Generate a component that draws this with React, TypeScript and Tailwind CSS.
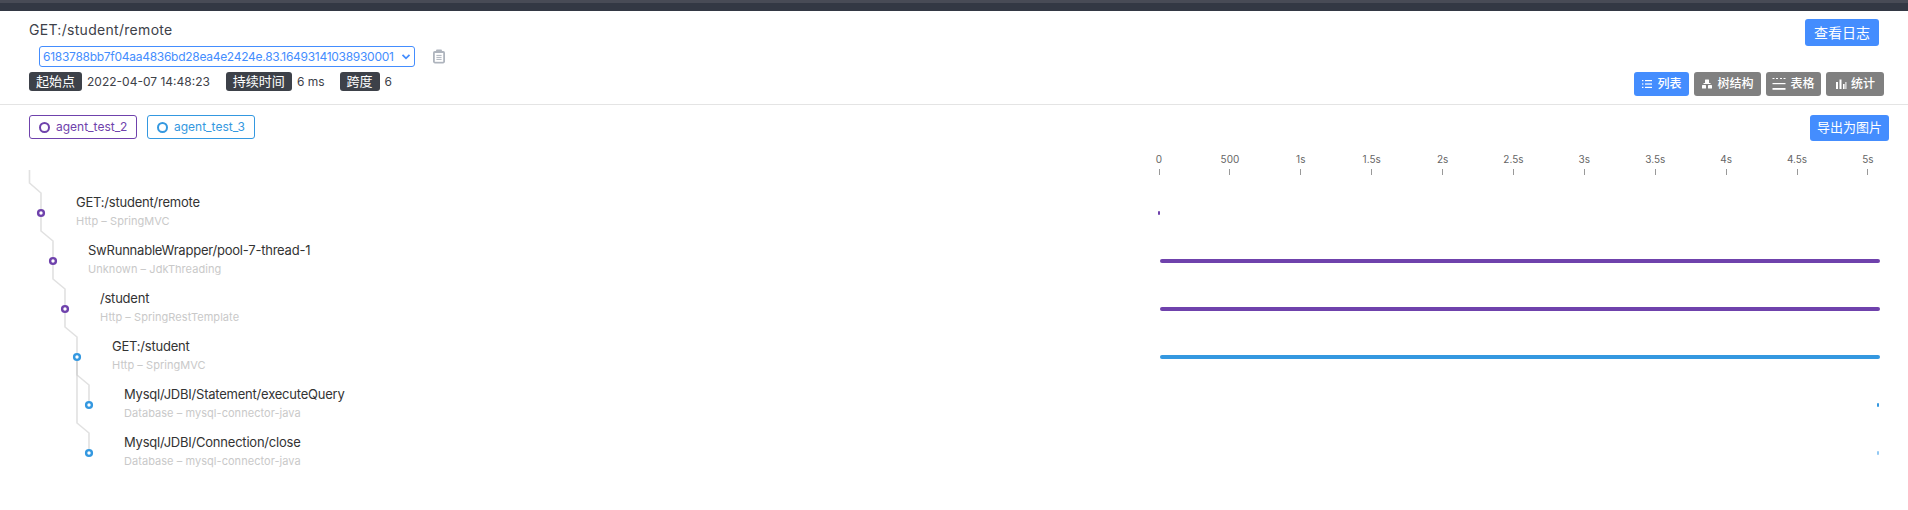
import React from 'react';

const sans = '[font-family:Inter,"Noto_Sans_CJK_SC",sans-serif]';

const spans = [
  { title: 'GET:/student/remote', sub: 'Http – SpringMVC', indent: 76, color: '#6f42ac', left: -1, width: 2 },
  { title: 'SwRunnableWrapper/pool-7-thread-1', sub: 'Unknown – JdkThreading', indent: 88, color: '#6f42ac', left: 1, width: 720 },
  { title: '/student', sub: 'Http – SpringRestTemplate', indent: 100, color: '#6f42ac', left: 1, width: 720 },
  { title: 'GET:/student', sub: 'Http – SpringMVC', indent: 112, color: '#3498e0', left: 1, width: 720 },
  { title: 'Mysql/JDBI/Statement/executeQuery', sub: 'Database – mysql-connector-java', indent: 124, color: '#3498e0', left: 718, width: 2 },
  { title: 'Mysql/JDBI/Connection/close', sub: 'Database – mysql-connector-java', indent: 124, color: '#93c9f3', left: 718, width: 2 },
];

const ticks = ['0', '500', '1s', '1.5s', '2s', '2.5s', '3s', '3.5s', '4s', '4.5s', '5s'];

const nodes = [
  { x: 41, y: 213, c: '#6f42ac' },
  { x: 53, y: 261, c: '#6f42ac' },
  { x: 65, y: 309, c: '#6f42ac' },
  { x: 77, y: 357, c: '#3498e0' },
  { x: 89, y: 405, c: '#3498e0' },
  { x: 89, y: 453, c: '#3498e0' },
];

const TreeLines = () => (
  <svg className="absolute left-0 top-0" width="120" height="510" fill="none">
    <g stroke="#c4c4c4" strokeOpacity="0.5" strokeWidth="1.6">
      <path d="M29.5 170V183L41 193V213" />
      <path d="M41 213V231L53 241V261" />
      <path d="M53 261V279L65 289V309" />
      <path d="M65 309V327L77 337V357" />
      <path d="M77 357V375L89 385V405" />
      <path d="M77 357V423L89 433V453" />
    </g>
    {nodes.map((n) => (
      <circle key={n.y} cx={n.x} cy={n.y} r="2.9" fill="#fff" stroke={n.c} strokeWidth="2.4" />
    ))}
  </svg>
);

const Tag = ({ children }: { children: React.ReactNode }) => (
  <span className="block rounded-[3px] bg-[#3d4149] px-[7px] text-[13px] leading-[19px] text-white">{children}</span>
);

const ViewBtn = ({ icon, label, active, width }: { icon: React.ReactNode; label: string; active?: boolean; width: string }) => (
  <button className={`flex h-6 items-center justify-center gap-[4px] rounded-[3px] text-[12px] font-medium text-white ${width} ${active ? 'bg-[#448dfe]' : 'bg-[#808080]'}`}>
    {icon}
    {label}
  </button>
);

const ListIcon = () => (
  <svg width="12" height="12" viewBox="0 0 12 12" fill="#fff">
    <rect x="1" y="2" width="1.4" height="1.2" /><rect x="4" y="2" width="7" height="1.2" />
    <rect x="1" y="5.4" width="1.4" height="1.2" /><rect x="4" y="5.4" width="7" height="1.2" />
    <rect x="1" y="8.8" width="1.4" height="1.2" /><rect x="4" y="8.8" width="7" height="1.2" />
  </svg>
);

const TreeIcon = () => (
  <svg width="12" height="12" viewBox="0 0 12 12" fill="#fff">
    <rect x="4" y="1.5" width="4" height="3.5" rx=".5" />
    <rect x="1" y="7" width="4" height="3.5" rx=".5" />
    <rect x="7" y="7" width="4" height="3.5" rx=".5" />
    <rect x="2.5" y="5" width="7" height="1" />
  </svg>
);

const TableIcon = () => (
  <svg width="14" height="14" viewBox="0 0 14 14" fill="#fff">
    <rect x="0.5" y="1" width="2" height="1" /><rect x="4" y="1" width="2" height="1" /><rect x="8" y="1" width="2" height="1" /><rect x="11.5" y="1" width="2" height="1" />
    <rect x="0.5" y="6" width="13" height="1.2" />
    <rect x="0.5" y="11" width="13" height="1.8" />
  </svg>
);

const ChartIcon = () => (
  <svg width="12" height="12" viewBox="0 0 12 12" fill="#fff">
    <rect x="1" y="4" width="2" height="7" /><rect x="4.5" y="1.5" width="2" height="9.5" /><rect x="8" y="6" width="1.6" height="5" /><rect x="10.4" y="4" width="1" height="7" />
  </svg>
);

const ClipboardIcon = () => (
  <svg width="14" height="15" viewBox="0 0 14 15" fill="none">
    <rect x="1" y="2" width="12" height="12.4" rx="1.8" fill="#aeb4bd" />
    <rect x="4" y="0.6" width="6" height="3" rx="1" fill="#aeb4bd" />
    <rect x="2.8" y="4" width="8.4" height="8.8" fill="#fff" />
    <path d="M4.4 6.4h5.2M4.4 8.4h5.2M4.4 10.4h5.2" stroke="#aeb4bd" />
  </svg>
);

const AgentChip = ({ name, color, border, text }: { name: string; color: string; border: string; text: string }) => (
  <span className={`flex h-6 w-[108px] items-center gap-[6px] rounded-[3px] border pl-[9px] text-[12px] ${border} ${text}`}>
    <span className={`size-[11px] rounded-full border-2 ${color}`} />
    {name}
  </span>
);

export default function App() {
  return (
    <div className={`relative h-[510px] w-[1908px] overflow-hidden bg-white text-[#3d4149] ${sans}`}>
      <div className="h-[11px] border-t-[3px] border-[#484b56] bg-[#333844]" />

      <header className="flex h-[94px] justify-between border-b border-[#e4e4e4] pl-[29px] pr-[24px] pt-[7px]">
        <div>
          <h1 className="text-[14px] font-normal leading-[24px] tracking-[0.3px]">GET:/student/remote</h1>
          <div className="ml-[10px] mt-[4px] flex items-center gap-[17px]">
            <div className="flex h-[21px] w-[376px] items-center justify-between rounded-[3px] border border-[#448dfe] pl-[3px] pr-[3px] text-[12px] tracking-[-0.28px] text-[#448dfe]">
              6183788bb7f04aa4836bd28ea4e2424e.83.16493141038930001
              <svg width="10" height="8" viewBox="0 0 10 8" fill="none"><path d="M1.5 1.8 5 5.3l3.5-3.5" stroke="#448dfe" strokeWidth="1.8" /></svg>
            </div>
            <ClipboardIcon />
          </div>
          <div className="mt-[5px] flex items-center text-[12px]">
            <Tag>起始点</Tag>
            <span className="ml-[5px]">2022-04-07 14:48:23</span>
            <span className="ml-[16px]"><Tag>持续时间</Tag></span>
            <span className="ml-[5px]">6 ms</span>
            <span className="ml-[15px]"><Tag>跨度</Tag></span>
            <span className="ml-[5px]">6</span>
          </div>
        </div>
        <div className="flex flex-col items-end">
          <button className="mr-[5px] mt-[1px] h-[27px] w-[74px] rounded-[3px] bg-[#448dfe] text-[14px] text-white">查看日志</button>
          <div className="mt-[26px] flex gap-[5px]">
            <ViewBtn active width="w-[55px]" icon={<ListIcon />} label="列表" />
            <ViewBtn width="w-[67px]" icon={<TreeIcon />} label="树结构" />
            <ViewBtn width="w-[55px]" icon={<TableIcon />} label="表格" />
            <ViewBtn width="w-[58px]" icon={<ChartIcon />} label="统计" />
          </div>
        </div>
      </header>

      <div className="flex items-start justify-between pl-[29px] pr-[19px] pt-[10px]">
        <div className="flex gap-[10px]">
          <AgentChip name="agent_test_2" color="border-[#6f42ac]" border="border-[#6f42ac]" text="text-[#6f42ac]" />
          <AgentChip name="agent_test_3" color="border-[#3498e0]" border="border-[#3498e0]" text="text-[#3498e0]" />
        </div>
        <button className="h-[26px] w-[79px] rounded-[3px] bg-[#448dfe] text-[13px] text-white">导出为图片</button>
      </div>

      <div className="ml-[1159px] mt-[12px] flex h-[26px] w-[709px] justify-between">
        {ticks.map((t) => (
          <div key={t} className="flex w-0 flex-col items-center">
            <span className="whitespace-nowrap text-[10px] leading-[13px] text-[#666]">{t}</span>
            <span className="mt-[3px] h-[6px] w-px shrink-0 bg-[#999]" />
          </div>
        ))}
      </div>

      <TreeLines />

      <div className="mt-[12px]">
        {spans.map((s) => (
          <div key={s.title + s.indent} className="flex h-[48px] items-start">
            <div className="w-[1159px] pt-[1px]" style={{ paddingLeft: s.indent }}>
              <div className="text-[13px] leading-[20px] tracking-[-0.22px] text-[#333]">{s.title}</div>
              <div className="mt-[2px] text-[11px] leading-[15px] tracking-[0.05px] text-[#c9c9c9]">{s.sub}</div>
            </div>
            <div className="relative mt-[20px] h-[4px] w-[722px]">
              <div className="absolute inset-y-0 rounded-[2px]" style={{ left: s.left, width: s.width, background: s.color }} />
            </div>
          </div>
        ))}
      </div>
    </div>
  );
}
